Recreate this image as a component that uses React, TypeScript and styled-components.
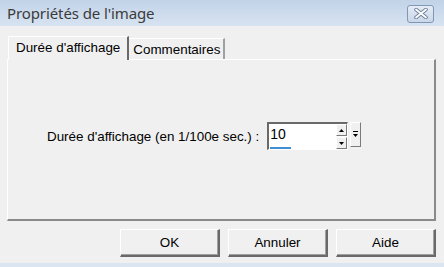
import styled, { createGlobalStyle } from "styled-components";

const GlobalStyle = createGlobalStyle`
  html, body {
    margin: 0;
    padding: 0;
    background: #f0f0f0;
  }
  * { box-sizing: border-box; }
`;

const Window = styled.div`
  width: 444px;
  height: 267px;
  display: flex;
  flex-direction: column;
  background: #f0f0f0;
  font-family: "Liberation Sans", Arial, sans-serif;
  font-size: 13.4px;
  color: #000;
  overflow: hidden;
`;

const TitleBar = styled.div`
  height: 26px;
  flex: none;
  display: flex;
  align-items: center;
  justify-content: space-between;
  padding: 0 10px 0 7px;
  background: linear-gradient(#c2d3e8, #d7e3f1);
`;

const Title = styled.span`
  font-family: "Noto Sans", "Open Sans", sans-serif;
  font-size: 15px;
  color: #3b3b3b;
  letter-spacing: -0.1px;
`;

const CloseButton = styled.div`
  width: 27px;
  height: 18px;
  margin-top: 1px;
  border: 1px solid #8197b5;
  border-radius: 3px;
  background: linear-gradient(#e4ecf6, #c9d7e9);
  display: flex;
  align-items: center;
  justify-content: center;
`;

const Body = styled.div`
  flex: 1;
  display: flex;
  flex-direction: column;
  padding: 9px 7px 0 7px;
`;

const TabStrip = styled.div`
  display: flex;
  align-items: flex-end;
  height: 24px;
  padding-left: 1px;
  position: relative;
  z-index: 1;
`;

const Tab = styled.div<{ $active?: boolean }>`
  height: ${(p) => (p.$active ? "24px" : "21px")};
  padding: 0 ${(p) => (p.$active ? "7px" : "3px")} 0 ${(p) => (p.$active ? "7px" : "4px")};
  display: flex;
  align-items: center;
  background: #f0f0f0;
  border-top: 1px solid #ffffff;
  border-left: ${(p) => (p.$active ? "1px solid #ffffff" : "none")};
  border-right: 2px solid ${(p) => (p.$active ? "#696969" : "#a0a0a0")};
  margin-bottom: ${(p) => (p.$active ? "-1px" : "0")};
  padding-bottom: ${(p) => (p.$active ? "2px" : "0")};
`;

const Panel = styled.div`
  height: 162px;
  margin-right: 1px;
  border-top: 1px solid #ffffff;
  border-left: 1px solid #ffffff;
  border-right: 2px solid #8a8a8a;
  border-bottom: 2px solid #8a8a8a;
  display: flex;
  align-items: flex-start;
  padding: 62px 0 0 39px;
`;

const Field = styled.div`
  display: flex;
  align-items: center;
  gap: 8px;
`;

const Label = styled.span`
  white-space: nowrap;
`;

const SpinBox = styled.div`
  display: flex;
  align-items: flex-start;
  gap: 2px;
`;

const InputFrame = styled.div`
  width: 81px;
  height: 28px;
  display: flex;
  border-top: 2px solid #696969;
  border-left: 2px solid #696969;
  border-right: 1px solid #ffffff;
  border-bottom: 1px solid #ffffff;
  background: #ffffff;
`;

const InputText = styled.div`
  flex: 1;
  display: flex;
  flex-direction: column;
  justify-content: space-between;
  padding: 2px 0 0 1px;
  font-size: 14px;
  line-height: 16px;
`;

const Caret = styled.span`
  display: block;
  width: 21px;
  height: 2px;
  background: #3f8fd4;
`;

const Arrows = styled.div`
  width: 11px;
  display: flex;
  flex-direction: column;
  gap: 1px;
`;

const ArrowButton = styled.div`
  height: 12px;
  background: #f0f0f0;
  border-top: 1px solid #ffffff;
  border-left: 1px solid #ffffff;
  border-right: 1px solid #7a7a7a;
  border-bottom: 1px solid #7a7a7a;
  display: flex;
  align-items: center;
  justify-content: center;
`;

const DropButton = styled.div`
  width: 11px;
  height: 25px;
  background: #f0f0f0;
  border-top: 1px solid #ffffff;
  border-left: 1px solid #ffffff;
  border-right: 1px solid #7a7a7a;
  border-bottom: 1px solid #7a7a7a;
  display: flex;
  align-items: center;
  justify-content: center;
`;

const ButtonRow = styled.div`
  display: flex;
  justify-content: flex-end;
  gap: 8px;
  padding: 8px 1px 0 0;
`;

const DialogButton = styled.button`
  width: 100px;
  height: 28px;
  padding: 0;
  font-family: "Liberation Sans", Arial, sans-serif;
  font-size: 13.4px;
  color: #000;
  background: #f0f0f0;
  border-top: 1px solid #ffffff;
  border-left: 1px solid #ffffff;
  border-right: 2px solid #696969;
  border-bottom: 2px solid #696969;
  box-shadow: inset -1px -1px 0 #a0a0a0;
`;

const BottomEdge = styled.div`
  height: 4px;
  margin-top: auto;
  background: #dbe5f1;
`;

function Triangle({ up }: { up?: boolean }) {
  return (
    <svg width="5" height="3" viewBox="0 0 5 3">
      <path d={up ? "M0 3 L2.5 0 L5 3 Z" : "M0 0 L2.5 3 L5 0 Z"} fill="#000" />
    </svg>
  );
}

export default function App() {
  return (
    <>
      <GlobalStyle />
      <Window>
        <TitleBar>
          <Title>Propriétés de l'image</Title>
          <CloseButton>
            <svg width="14" height="11" viewBox="0 0 14 11">
              <path d="M2 1.5 L12 9.5 M12 1.5 L2 9.5" stroke="#6d7f99" strokeWidth="3.6" strokeLinecap="round" />
              <path d="M2 1.5 L12 9.5 M12 1.5 L2 9.5" stroke="#ffffff" strokeWidth="1.8" strokeLinecap="round" />
            </svg>
          </CloseButton>
        </TitleBar>
        <Body>
          <TabStrip>
            <Tab $active>Durée d'affichage</Tab>
            <Tab>Commentaires</Tab>
          </TabStrip>
          <Panel>
            <Field>
              <Label>Durée d'affichage (en 1/100e sec.) :</Label>
              <SpinBox>
                <InputFrame>
                  <InputText>
                    10
                    <Caret />
                  </InputText>
                  <Arrows>
                    <ArrowButton><Triangle up /></ArrowButton>
                    <ArrowButton><Triangle /></ArrowButton>
                  </Arrows>
                </InputFrame>
                <DropButton>
                  <svg width="5" height="7" viewBox="0 0 5 7">
                    <rect x="0" y="0" width="5" height="1" fill="#000" />
                    <path d="M0 3 L2.5 6 L5 3 Z" fill="#000" />
                  </svg>
                </DropButton>
              </SpinBox>
            </Field>
          </Panel>
          <ButtonRow>
            <DialogButton>OK</DialogButton>
            <DialogButton>Annuler</DialogButton>
            <DialogButton>Aide</DialogButton>
          </ButtonRow>
        </Body>
        <BottomEdge />
      </Window>
    </>
  );
}
